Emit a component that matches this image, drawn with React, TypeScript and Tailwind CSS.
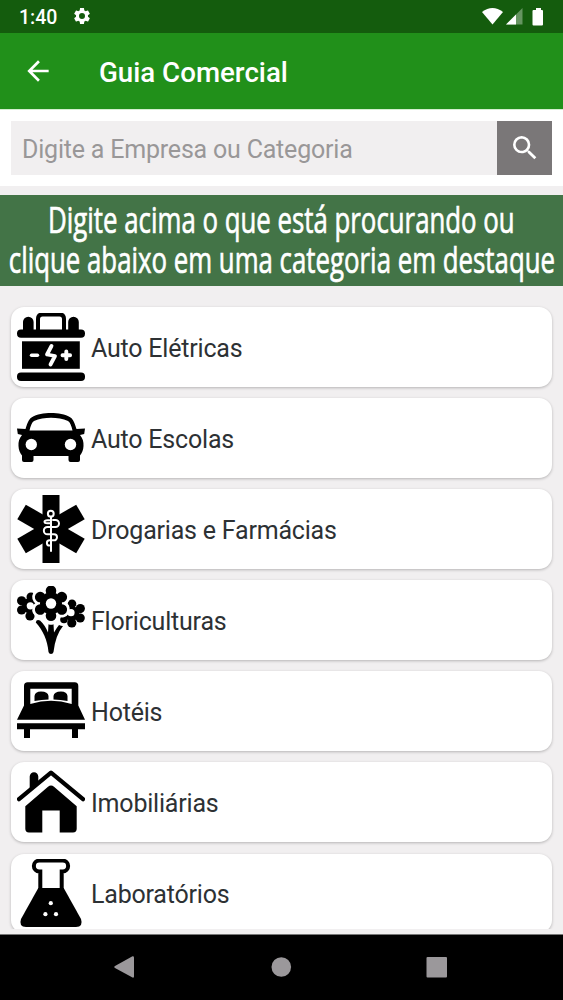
import type { ReactNode } from "react";

type Category = {
  name: string;
  icon: ReactNode;
};

const petals = [0, 60, 120, 180, 240, 300];

const categories: Category[] = [
  {
    name: "Auto Elétricas",
    icon: (
      <>
        <path d="M6 20V9a5.3 5.3 0 0 1 10.6 0v11zM51.2 20V9a5.3 5.3 0 0 1 10.6 0v11z" />
        <path d="M21 18V6q0-4.5 4.500-4.500h17q4.500 0 4.500 4.500v12" fill="none" stroke="black" strokeWidth="4" />
        <rect y="16.500" width="68" height="8.300" rx="4" />
        <rect x="5" y="28.300" width="57.800" height="27.500" />
        <rect y="59.500" width="68" height="8.500" rx="4" />
        <path d="M14.500 42.200h6" fill="none" stroke="white" strokeWidth="3.400" strokeLinecap="round" />
        <path
          d="M34.500 33l-4.500 8.500 8 1.500-4.500 8.500"
          fill="none"
          stroke="white"
          strokeWidth="3.800"
          strokeLinecap="round"
          strokeLinejoin="round"
        />
        <path d="M49.300 38.500v7.600M45.500 42.300h7.600" fill="none" stroke="white" strokeWidth="3.900" strokeLinecap="round" />
      </>
    ),
  },
  {
    name: "Auto Escolas",
    icon: (
      <>
        <path
          fillRule="evenodd"
          d="M0 24.500l8.500.5C10 20 11.500 15.500 14.500 13.500 20 10 27 9 34 9s14 1 19.500 4.500c3 2 4.500 6.500 6 11.500l8.500-.5-.8 5.500-4.200 1c3 3.500 3.700 7 3.500 11-.1 4-1.500 7-3.500 9.500V56q0 2-2 2h-7.500q-2 0-2-2v-4h-35v4q0 2-2 2H7q-2 0-2-2v-4.500C3 49 1.600 46 1.500 42c-.2-4 .5-7.500 3.500-11l-4.200-1zM12.500 26.500h43c-1-4.500-2.500-8.300-4.500-9.500C46 14.500 40 13.800 34 13.800S22 14.500 17 17c-2 1.200-3.500 5-4.500 9.500z"
        />
        <circle cx="14.300" cy="40.500" r="5.700" fill="white" />
        <circle cx="53.500" cy="40.500" r="5.700" fill="white" />
      </>
    ),
  },
  {
    name: "Drogarias e Farmácias",
    icon: (
      <>
        <rect x="25.500" width="17" height="68" />
        <rect x="25.500" width="17" height="68" transform="rotate(60 34 34)" />
        <rect x="25.500" width="17" height="68" transform="rotate(120 34 34)" />
        <g fill="none" stroke="white" strokeWidth="2" strokeLinecap="round">
          <circle cx="33.800" cy="18.700" r="2.900" />
          <path d="M34 22v34" />
          <path d="M34 28.300h-3.500q-3 0-3-1.500t3-1.500h2M36 25h2.500a3.500 3.500 0 0 1 0 7H30.500a3.300 3.300 0 0 0 0 7.300H37a3 3 0 0 1 0 6H32.500a2.500 2.500 0 0 0 0 5.200" />
        </g>
      </>
    ),
  },
  {
    name: "Floriculturas",
    icon: (
      <>
        {/* side flowers, partly hidden behind the middle one */}
        <circle cx="12.500" cy="19.800" r="7.500" />
        <circle cx="14" cy="11" r="4.500" />
        <circle cx="4.600" cy="14.800" r="4.600" />
        <circle cx="4.600" cy="24" r="4.600" />
        <circle cx="13" cy="30" r="4.600" />
        <circle cx="13.300" cy="19.800" r="3.600" fill="white" />
        <circle cx="54.800" cy="27.500" r="7.500" />
        <circle cx="55" cy="17.800" r="4.300" />
        <circle cx="63.300" cy="22.600" r="4.600" />
        <circle cx="63.200" cy="32" r="4.600" />
        <circle cx="54.800" cy="37" r="4.600" />
        <circle cx="47" cy="33.500" r="3.800" />
        <circle cx="54" cy="26.700" r="3.600" fill="white" />
        {petals.map((angle) => (
          <circle key={angle} cx="34" cy="4.800" r="8" fill="white" transform={`rotate(${angle} 34 17.300)`} />
        ))}
        <circle cx="34" cy="17.300" r="11" />
        {petals.map((angle) => (
          <circle key={angle} cx="34" cy="4.800" r="5.300" transform={`rotate(${angle} 34 17.300)`} />
        ))}
        <circle cx="34" cy="17.500" r="5.200" fill="white" />
        <path d="M18.800 36.500q.5-3.500 4.200-2 5 4.500 8 12l.5-8.300q2.500 1.300 5 0l.5 8.300q2.500-4.500 5-7.500 2.500 1.200 4 1-7.500 9-9.500 26-.5 2-2.500 2t-2.500-2c-1-12-5.500-21.500-12.700-29.500z" />
      </>
    ),
  },
  {
    name: "Hotéis",
    icon: (
      <>
        <path
          fillRule="evenodd"
          d="M7 28.500V9q0-3.700 3.700-3.700h47q3.600 0 3.600 3.700v19.500L68 42.700H0zM13.300 11.700v15.300Q24 23.800 34 23.800t20.700 3.200V11.700z"
        />
        <path d="M17.500 24v-5q.5-4.300 6.500-4.500 7 0 7.500 4.500v3.500q-7 .2-14 1.500zM50.500 24v-5q-.5-4.300-6.500-4.500-7 0-7.500 4.500v3.500q7 .2 14 1.500z" />
        <path d="M0 46.300h68v6h-7V61h-6v-8.700H13V61H7v-8.700H0z" />
      </>
    ),
  },
  {
    name: "Imobiliárias",
    icon: (
      <>
        <path d="M12.700 21V8.500a4.300 4.300 0 0 1 8.600 0V16z" />
        <path
          d="M2 31.200L34 4.700l32 26.500"
          fill="none"
          stroke="black"
          strokeWidth="4.300"
          strokeLinecap="round"
          strokeLinejoin="round"
        />
        <path d="M31 18.800q3-2.500 6 0l22.700 19.500v22.500q0 3.700-3.700 3.700H42.700v-22H25.300v22H12q-3.700 0-3.700-3.700V38.300z" />
      </>
    ),
  },
  {
    name: "Laboratórios",
    icon: (
      <>
        <path
          d="M23.300 31V12.500h-1a5.200 5.200 0 0 1 0-10.900h23.400a5.200 5.200 0 0 1 0 10.900h-1V31"
          fill="none"
          stroke="black"
          strokeWidth="4"
        />
        <path d="M21.300 29h25.400l17.300 31q2.500 7.700-5 8H9q-7.500-.3-5-8z" />
        <circle cx="33.800" cy="44.200" r="2.100" fill="white" />
        <circle cx="28.400" cy="55.200" r="2.100" fill="white" />
        <circle cx="39" cy="55.200" r="2.100" fill="white" />
      </>
    ),
  },
];

function StatusBar() {
  return (
    <div className="flex h-[33px] items-center bg-[#145c0d] pl-[19px] text-white">
      <span className="w-[53px] pt-0.5 text-[19.500px] font-medium leading-none">1:40</span>
      <svg className="-mt-px size-5" viewBox="0 0 24 24" fill="white">
        <path d="M19.140 12.940c.04-.3.060-.61.060-.94 0-.32-.02-.64-.07-.94l2.030-1.580c.18-.14.230-.41.120-.61l-1.920-3.320c-.12-.22-.37-.29-.59-.22l-2.390.96c-.5-.38-1.030-.7-1.620-.94l-.36-2.540c-.04-.24-.24-.41-.48-.41h-3.840c-.24 0-.43.170-.47.410l-.36 2.540c-.59.240-1.130.570-1.620.940l-2.390-.96c-.22-.08-.47 0-.59.220L2.740 8.870c-.12.210-.08.470.120.610l2.030 1.580c-.05.300-.09.630-.09.940s.020.640.070.940l-2.030 1.580c-.18.140-.23.410-.12.610l1.920 3.320c.12.220.37.290.59.220l2.390-.96c.5.380 1.030.7 1.620.94l.36 2.540c.05.240.24.410.48.410h3.840c.24 0 .44-.17.470-.41l.36-2.540c.59-.24 1.130-.56 1.620-.94l2.390.96c.22.080.47 0 .59-.22l1.920-3.320c.12-.22.070-.47-.12-.61zM12 15.600A3.600 3.600 0 1 1 12 8.400a3.600 3.600 0 0 1 0 7.200z" />
      </svg>
      <svg className="ml-auto mr-5 h-[18px] w-[61px]" viewBox="0 0 61 18" fill="white">
        <path d="M0 4Q10.500-4 21 4L10.500 16.500z" />
        <path d="M40.500 0v16.500H24z" opacity="0.350" />
        <path d="M34 6.500v10H24z" />
        <path d="M51.500 2H54V0h5v2h1q1 0 1 1v13.500q0 1-1 1h-8.500q-1 0-1-1V3q0-1 1-1z" />
      </svg>
    </div>
  );
}

function SearchBox() {
  return (
    <div className="flex h-[77px] border-t border-[#d4efd0] bg-white px-[11px] pt-[11px]">
      <div className="flex h-[54px] flex-1 items-center bg-[#f1eff0] pl-[11px] pt-[3px] text-[25px] tracking-[-0.200px] text-[#999798]">
        Digite a Empresa ou Categoria
      </div>
      <button className="flex h-[54px] w-[55px] items-center justify-center bg-[#7a7778]">
        <svg className="size-8" viewBox="0 0 24 24" fill="white">
          <path d="M15.500 14h-.79l-.28-.27A6.471 6.471 0 0 0 16 9.500 6.500 6.500 0 1 0 9.500 16c1.610 0 3.090-.59 4.230-1.570l.27.280v.79l5 4.990L20.490 19l-4.990-5zm-6 0C7.010 14 5 11.990 5 9.500S7.010 5 9.500 5 14 7.010 14 9.500 11.990 14 9.500 14z" />
        </svg>
      </button>
    </div>
  );
}

function CategoryCard({ name, icon }: Category) {
  return (
    <div className="flex h-[79.500px] shrink-0 items-center rounded-[13px] bg-white pl-1.5 shadow-[0_1px_3px_rgba(0,0,0,0.25)]">
      <svg className="size-[68px]" viewBox="0 0 68 68">
        {icon}
      </svg>
      <span className="pl-1.5 pt-[3px] text-[25px] tracking-[-0.200px] text-[#2d3134]">{name}</span>
    </div>
  );
}

export default function App() {
  return (
    <div className="flex h-[1000px] w-[563px] flex-col overflow-hidden bg-[#f1eff0] font-['Roboto',sans-serif]">
      <StatusBar />
      <header className="flex h-[76px] items-center bg-[#21901a] pl-[22px] text-white">
        <svg className="size-8" viewBox="0 0 24 24" fill="white">
          <path d="M20 11H7.830l5.590-5.590L12 4l-8 8 8 8 1.410-1.410L7.830 13H20v-2z" />
        </svg>
        <h1 className="pl-[45px] pt-[3px] text-[27.700px] font-medium">Guia Comercial</h1>
      </header>
      <SearchBox />
      <div className="mt-[9px] flex h-[91px] flex-col items-center bg-[#437447] pt-[5px] font-['Open_Sans',sans-serif] text-[36px] leading-[40px] text-white [-webkit-text-stroke:0.700px_white]">
        <p className="scale-x-[0.717] whitespace-nowrap">Digite acima o que está procurando ou</p>
        <p className="scale-x-[0.717] whitespace-nowrap">clique abaixo em uma categoria em destaque</p>
      </div>
      <main className="flex h-[643px] flex-col gap-[11.600px] overflow-hidden px-[11px] pt-[21px]">
        {categories.map((category) => (
          <CategoryCard key={category.name} {...category} />
        ))}
      </main>
      <nav className="mt-auto flex h-[66px] items-center border-t border-[#777] bg-black pb-0.5 pl-[114px]">
        <svg className="h-[22px] w-[334px]" viewBox="0 0 334 22" fill="#9b989b">
          <path d="M1 10L18.500.2Q20 0 20 1.500v19q0 1.500-1.500 1L1 12q-1.500-1 0-2z" />
          <circle cx="167.300" cy="11" r="9.800" />
          <rect x="312.500" y="1" width="20.500" height="20.500" rx="1" />
        </svg>
      </nav>
    </div>
  );
}
